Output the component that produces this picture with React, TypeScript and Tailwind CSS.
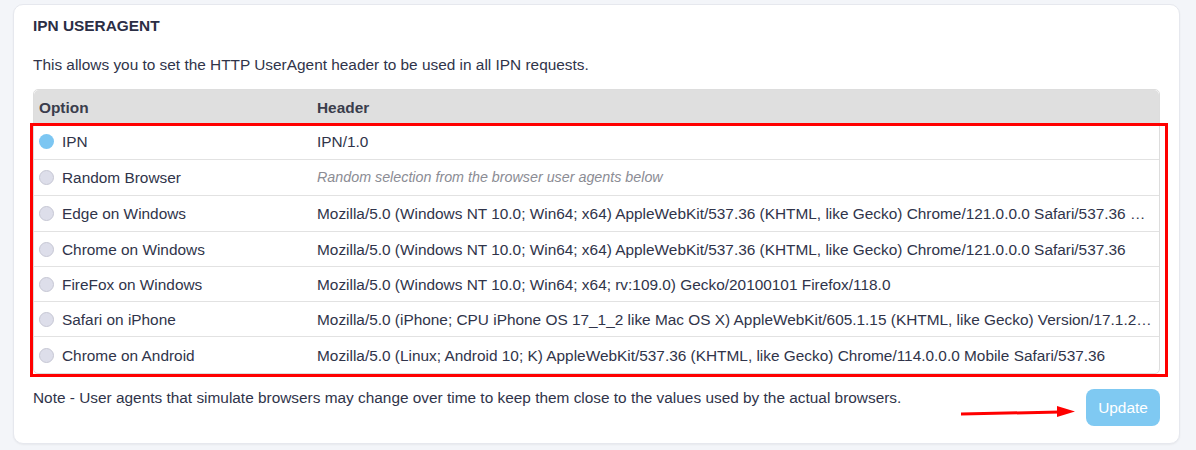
import React from "react";

const rows = [
  { name: "IPN", header: "IPN/1.0", selected: true, h: "h-[36px]" },
  { name: "Random Browser", header: "Random selection from the browser user agents below", italic: true, h: "h-[36px]" },
  { name: "Edge on Windows", header: "Mozilla/5.0 (Windows NT 10.0; Win64; x64) AppleWebKit/537.36 (KHTML, like Gecko) Chrome/121.0.0.0 Safari/537.36 …", h: "h-[36px]" },
  { name: "Chrome on Windows", header: "Mozilla/5.0 (Windows NT 10.0; Win64; x64) AppleWebKit/537.36 (KHTML, like Gecko) Chrome/121.0.0.0 Safari/537.36", h: "h-[35px]" },
  { name: "FireFox on Windows", header: "Mozilla/5.0 (Windows NT 10.0; Win64; x64; rv:109.0) Gecko/20100101 Firefox/118.0", h: "h-[35px]" },
  { name: "Safari on iPhone", header: "Mozilla/5.0 (iPhone; CPU iPhone OS 17_1_2 like Mac OS X) AppleWebKit/605.1.15 (KHTML, like Gecko) Version/17.1.2…", h: "h-[35px]" },
  { name: "Chrome on Android", header: "Mozilla/5.0 (Linux; Android 10; K) AppleWebKit/537.36 (KHTML, like Gecko) Chrome/114.0.0.0 Mobile Safari/537.36", h: "h-[36px]" },
];

export default function App() {
  return (
    <div className="min-h-[450px] w-[1196px] bg-[#f3f5f9] pt-[4px] pl-[13px] font-['Liberation_Sans',Arial,sans-serif] text-[#30344a]">
      <div className="relative w-[1167px] rounded-[10px] border border-[#e6e8ee] bg-white pt-[11px] px-[19px] pb-[17px] shadow-[0_1px_2px_rgba(0,0,0,0.05)]">
        <div className="h-[20px] text-[15.4px] font-bold leading-[20px] text-[#2b2e45]">IPN USERAGENT</div>
        <div className="mt-[19px] h-[20px] text-[15.4px] leading-[20px]">
          This allows you to set the HTTP UserAgent header to be used in all IPN requests.
        </div>

        <div className="relative mt-[14px] rounded-[5px] border border-[#dddddd]">
          <div className="flex h-[34px] items-center rounded-t-[5px] bg-[#dfdfdf] pt-[1px] text-[15.4px] font-bold text-[#3a3d4c]">
            <div className="w-[278px] pl-[5px]">Option</div>
            <div className="pl-[5px]">Header</div>
          </div>
          {rows.map((r, i) => (
            <div
              key={r.name}
              className={`flex ${r.h} items-center pt-[1px] text-[15.4px] ${i < rows.length - 1 ? "border-b border-[#e2e2e2]" : ""}`}
            >
              <div className="flex w-[278px] shrink-0 items-center pl-[5px]">
                {r.selected ? (
                  <span className="h-[15px] w-[15px] rounded-full bg-[#7cc6f2]" />
                ) : (
                  <span className="h-[15px] w-[15px] rounded-full border border-[#c6c7d4] bg-[#dddeea]" />
                )}
                <span className="ml-[8px]">{r.name}</span>
              </div>
              <div
                className={`min-w-0 flex-1 overflow-hidden whitespace-nowrap pl-[5px] pr-[3px] ${r.italic ? "text-[14.3px] italic text-[#8b8c94]" : ""}`}
              >
                {r.header}
              </div>
            </div>
          ))}
          <div className="pointer-events-none absolute left-[-4px] top-[33px] h-[254px] w-[1138px] border-[3px] border-[#ff0000]" />
        </div>

        <div className="mt-[15px] flex items-start justify-between">
          <div className="text-[15.4px] leading-[18px]">
            Note - User agents that simulate browsers may change over time to keep them close to the values used by the actual browsers.
          </div>
          <button className="h-[37px] w-[74px] rounded-[8px] bg-[#7fc9f2] text-[15.4px] text-white">Update</button>
        </div>

        <svg className="absolute left-[946px] top-[395px]" width="120" height="24" viewBox="0 0 120 24">
          <path d="M1 14 L100 12" stroke="#ff0000" strokeWidth="3" fill="none" />
          <polygon points="97,6 115,11.5 97,17" fill="#ff0000" />
        </svg>
      </div>
    </div>
  );
}
